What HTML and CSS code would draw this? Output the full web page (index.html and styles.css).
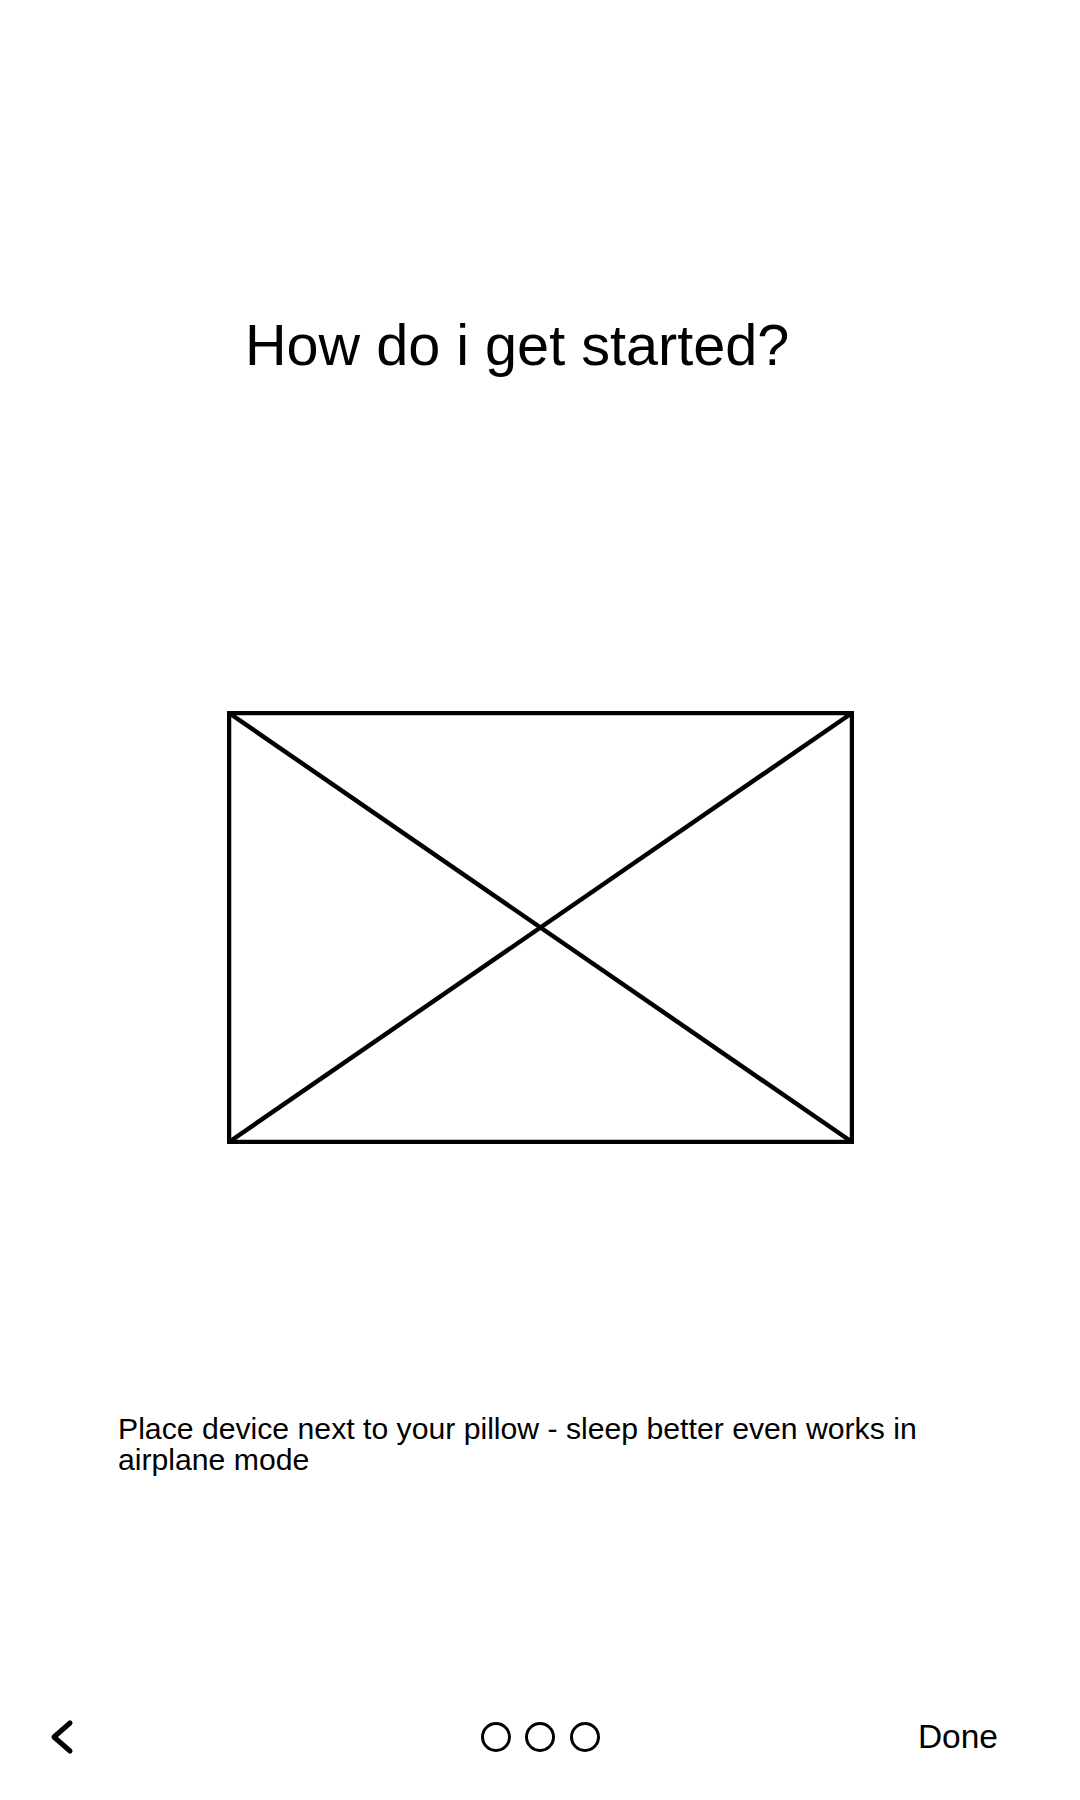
FILE: index.html
```html
<!DOCTYPE html>
<html lang="en">
<head>
<meta charset="utf-8">
<title>How do i get started?</title>
<link rel="stylesheet" href="styles.css">
</head>
<body>
<div class="page">
  <h1 class="title">How do i get started?</h1>
  <div class="figure">
    <svg class="placeholder" width="627" height="433" viewBox="0 0 627 433" aria-hidden="true">
      <rect x="2" y="2" width="623" height="429" fill="none" stroke="#000" stroke-width="4.5"/>
      <line x1="2" y1="2" x2="625" y2="431" stroke="#000" stroke-width="4.5"/>
      <line x1="625" y1="2" x2="2" y2="431" stroke="#000" stroke-width="4.5"/>
    </svg>
  </div>
  <p class="desc">Place device next to your pillow - sleep better even works in airplane mode</p>
  <div class="footer">
    <button class="back" aria-label="Back">
      <svg width="26" height="36" viewBox="0 0 26 36" aria-hidden="true">
        <polyline points="21,4 5,18 21,32" fill="none" stroke="#000" stroke-width="5" stroke-linecap="round" stroke-linejoin="round"/>
      </svg>
    </button>
    <div class="dots">
      <svg class="dot" width="30" height="30" viewBox="0 0 30 30"><circle cx="15" cy="15" r="13.5" fill="none" stroke="#000" stroke-width="3"/></svg>
      <svg class="dot" width="30" height="30" viewBox="0 0 30 30"><circle cx="15" cy="15" r="13.5" fill="none" stroke="#000" stroke-width="3"/></svg>
      <svg class="dot" width="30" height="30" viewBox="0 0 30 30"><circle cx="15" cy="15" r="13.5" fill="none" stroke="#000" stroke-width="3"/></svg>
    </div>
    <span class="done">Done</span>
  </div>
</div>
</body>
</html>
```

FILE: styles.css
```css
* { box-sizing: border-box; }
html, body {
  margin: 0;
  padding: 0;
  background: #fff;
}
body {
  font-family: "Liberation Sans", Arial, sans-serif;
  color: #000;
}
.page {
  width: 1080px;
  height: 1800px;
  display: flex;
  flex-direction: column;
  padding-top: 313px;
}
.title {
  margin: 0;
  padding-left: 245px;
  font-size: 57.6px;
  font-weight: 400;
  line-height: 64px;
  white-space: nowrap;
}
.figure {
  margin-top: 334px;
  display: flex;
  justify-content: center;
}
.placeholder { display: block; }
.desc {
  margin: 269px 0 0 0;
  padding-left: 118px;
  width: 960px;
  font-size: 30.2px;
  line-height: 31px;
}
.footer {
  margin-top: 225px;
  height: 74px;
  display: grid;
  grid-template-columns: 1fr auto 1fr;
  align-items: center;
  padding: 0 49px;
}
.back {
  justify-self: start;
  border: 0;
  background: none;
  padding: 0;
  display: flex;
}
.back svg { display: block; }
.dots {
  display: flex;
  gap: 14.5px;
}
.dot { display: block; }
.done {
  justify-self: end;
  margin-right: 33px;
  font-size: 33.5px;
  line-height: 38px;
}
```
